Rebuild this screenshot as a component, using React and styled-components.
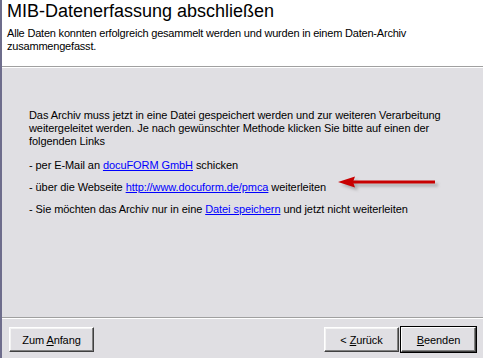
import React from 'react'
import styled, { createGlobalStyle } from 'styled-components'

const GlobalStyle = createGlobalStyle`
  html, body {
    margin: 0;
    padding: 0;
    background: #e0dfe3;
  }
  body {
    font-family: "Liberation Sans", Arial, sans-serif;
    font-size: 11px;
    letter-spacing: -0.08px;
    color: #000;
  }
`

const Dialog = styled.div`
  width: 483px;
  height: 358px;
  box-sizing: border-box;
  border-left: 2px solid #6e6d8c;
  background: #e0dfe3;
  display: flex;
  flex-direction: column;
`

const Header = styled.header`
  height: 67px;
  box-sizing: border-box;
  background: #fff;
  padding: 1px 0 0 5px;
  border-bottom: 1px solid #a0a0a0;
`

const Title = styled.h1`
  margin: 0;
  font-size: 18px;
  font-weight: normal;
  line-height: 21px;
  letter-spacing: 0;
`

const Subtitle = styled.p`
  margin: 5px 0 0;
  line-height: 13px;
  white-space: nowrap;
  letter-spacing: -0.2px;
`

const Content = styled.main`
  flex: 1;
  position: relative;
  border-top: 1px solid #fff;
  padding: 41px 0 0 27px;
  line-height: 13px;
`

const Intro = styled.p`
  margin: 0;
  white-space: nowrap;
`

const Option = styled.p`
  margin: ${({ first }) => (first ? '11px' : '9px')} 0 0;
  white-space: nowrap;
`

const Link = styled.a`
  color: #0000ff;
  text-decoration: underline;
  cursor: pointer;
`

const Arrow = styled.svg`
  position: absolute;
  left: 332px;
  top: 103px;
`

const Footer = styled.footer`
  border-top: 1px solid #a0a0a0;
  box-shadow: inset 0 1px 0 #fff;
  padding: 9px 7px 6px 7px;
  display: flex;
  align-items: center;
`

const Spacer = styled.div`
  flex: 1;
`

const Button = styled.button`
  width: ${({ wide }) => (wide ? '85px' : '75px')};
  height: 25px;
  margin-left: ${({ gap }) => gap || 0};
  font-family: "Liberation Sans", Arial, sans-serif;
  font-size: 11px;
  letter-spacing: -0.1px;
  color: #000;
  background: #e0dfe3;
  padding: 0;
  border: 1px solid;
  border-color: #fff #404040 #404040 #fff;
  box-shadow: ${({ primary }) =>
    primary
      ? '0 0 0 1px #000, inset -1px -1px 0 #808080'
      : 'inset -1px -1px 0 #808080, inset 1px 1px 0 #f4f4f4'};
  u {
    text-decoration: underline;
  }
`

export default function App() {
  return (
    <>
      <GlobalStyle />
      <Dialog>
        <Header>
          <Title>MIB-Datenerfassung abschließen</Title>
          <Subtitle>
            Alle Daten konnten erfolgreich gesammelt werden und wurden in einem Daten-Archiv
            <br />
            zusammengefasst.
          </Subtitle>
        </Header>
        <Content>
          <Intro>
            Das Archiv muss jetzt in eine Datei gespeichert werden und zur weiteren Verarbeitung
            <br />
            weitergeleitet werden. Je nach gewünschter Methode klicken Sie bitte auf einen der
            <br />
            folgenden Links
          </Intro>
          <Option first>
            - per E-Mail an <Link>docuFORM GmbH</Link> schicken
          </Option>
          <Option>
            - über die Webseite <Link>http://www.docuform.de/pmca</Link> weiterleiten
          </Option>
          <Option>
            - Sie möchten das Archiv nur in eine <Link>Datei speichern</Link> und jetzt nicht weiterleiten
          </Option>
          <Arrow width="112" height="26" viewBox="0 0 112 26">
            <defs>
              <filter id="sh" x="-10%" y="-50%" width="130%" height="200%">
                <feGaussianBlur stdDeviation="1.5" />
              </filter>
            </defs>
            <g transform="translate(3 3)" fill="#8a8a8a" opacity="0.6" filter="url(#sh)">
              <polygon points="4,11 21,5.5 19,11 21,16.5" />
              <rect x="18" y="9.5" width="83" height="3" />
            </g>
            <polygon points="4,11 21,5.5 19,11 21,16.5" fill="#c80000" />
            <rect x="18" y="9.5" width="83" height="3" fill="#c80000" />
          </Arrow>
        </Content>
        <Footer>
          <Button wide>Zum <u>A</u>nfang</Button>
          <Spacer />
          <Button>&lt; <u>Z</u>urück</Button>
          <Button primary gap="2px"><u>B</u>eenden</Button>
        </Footer>
      </Dialog>
    </>
  )
}
